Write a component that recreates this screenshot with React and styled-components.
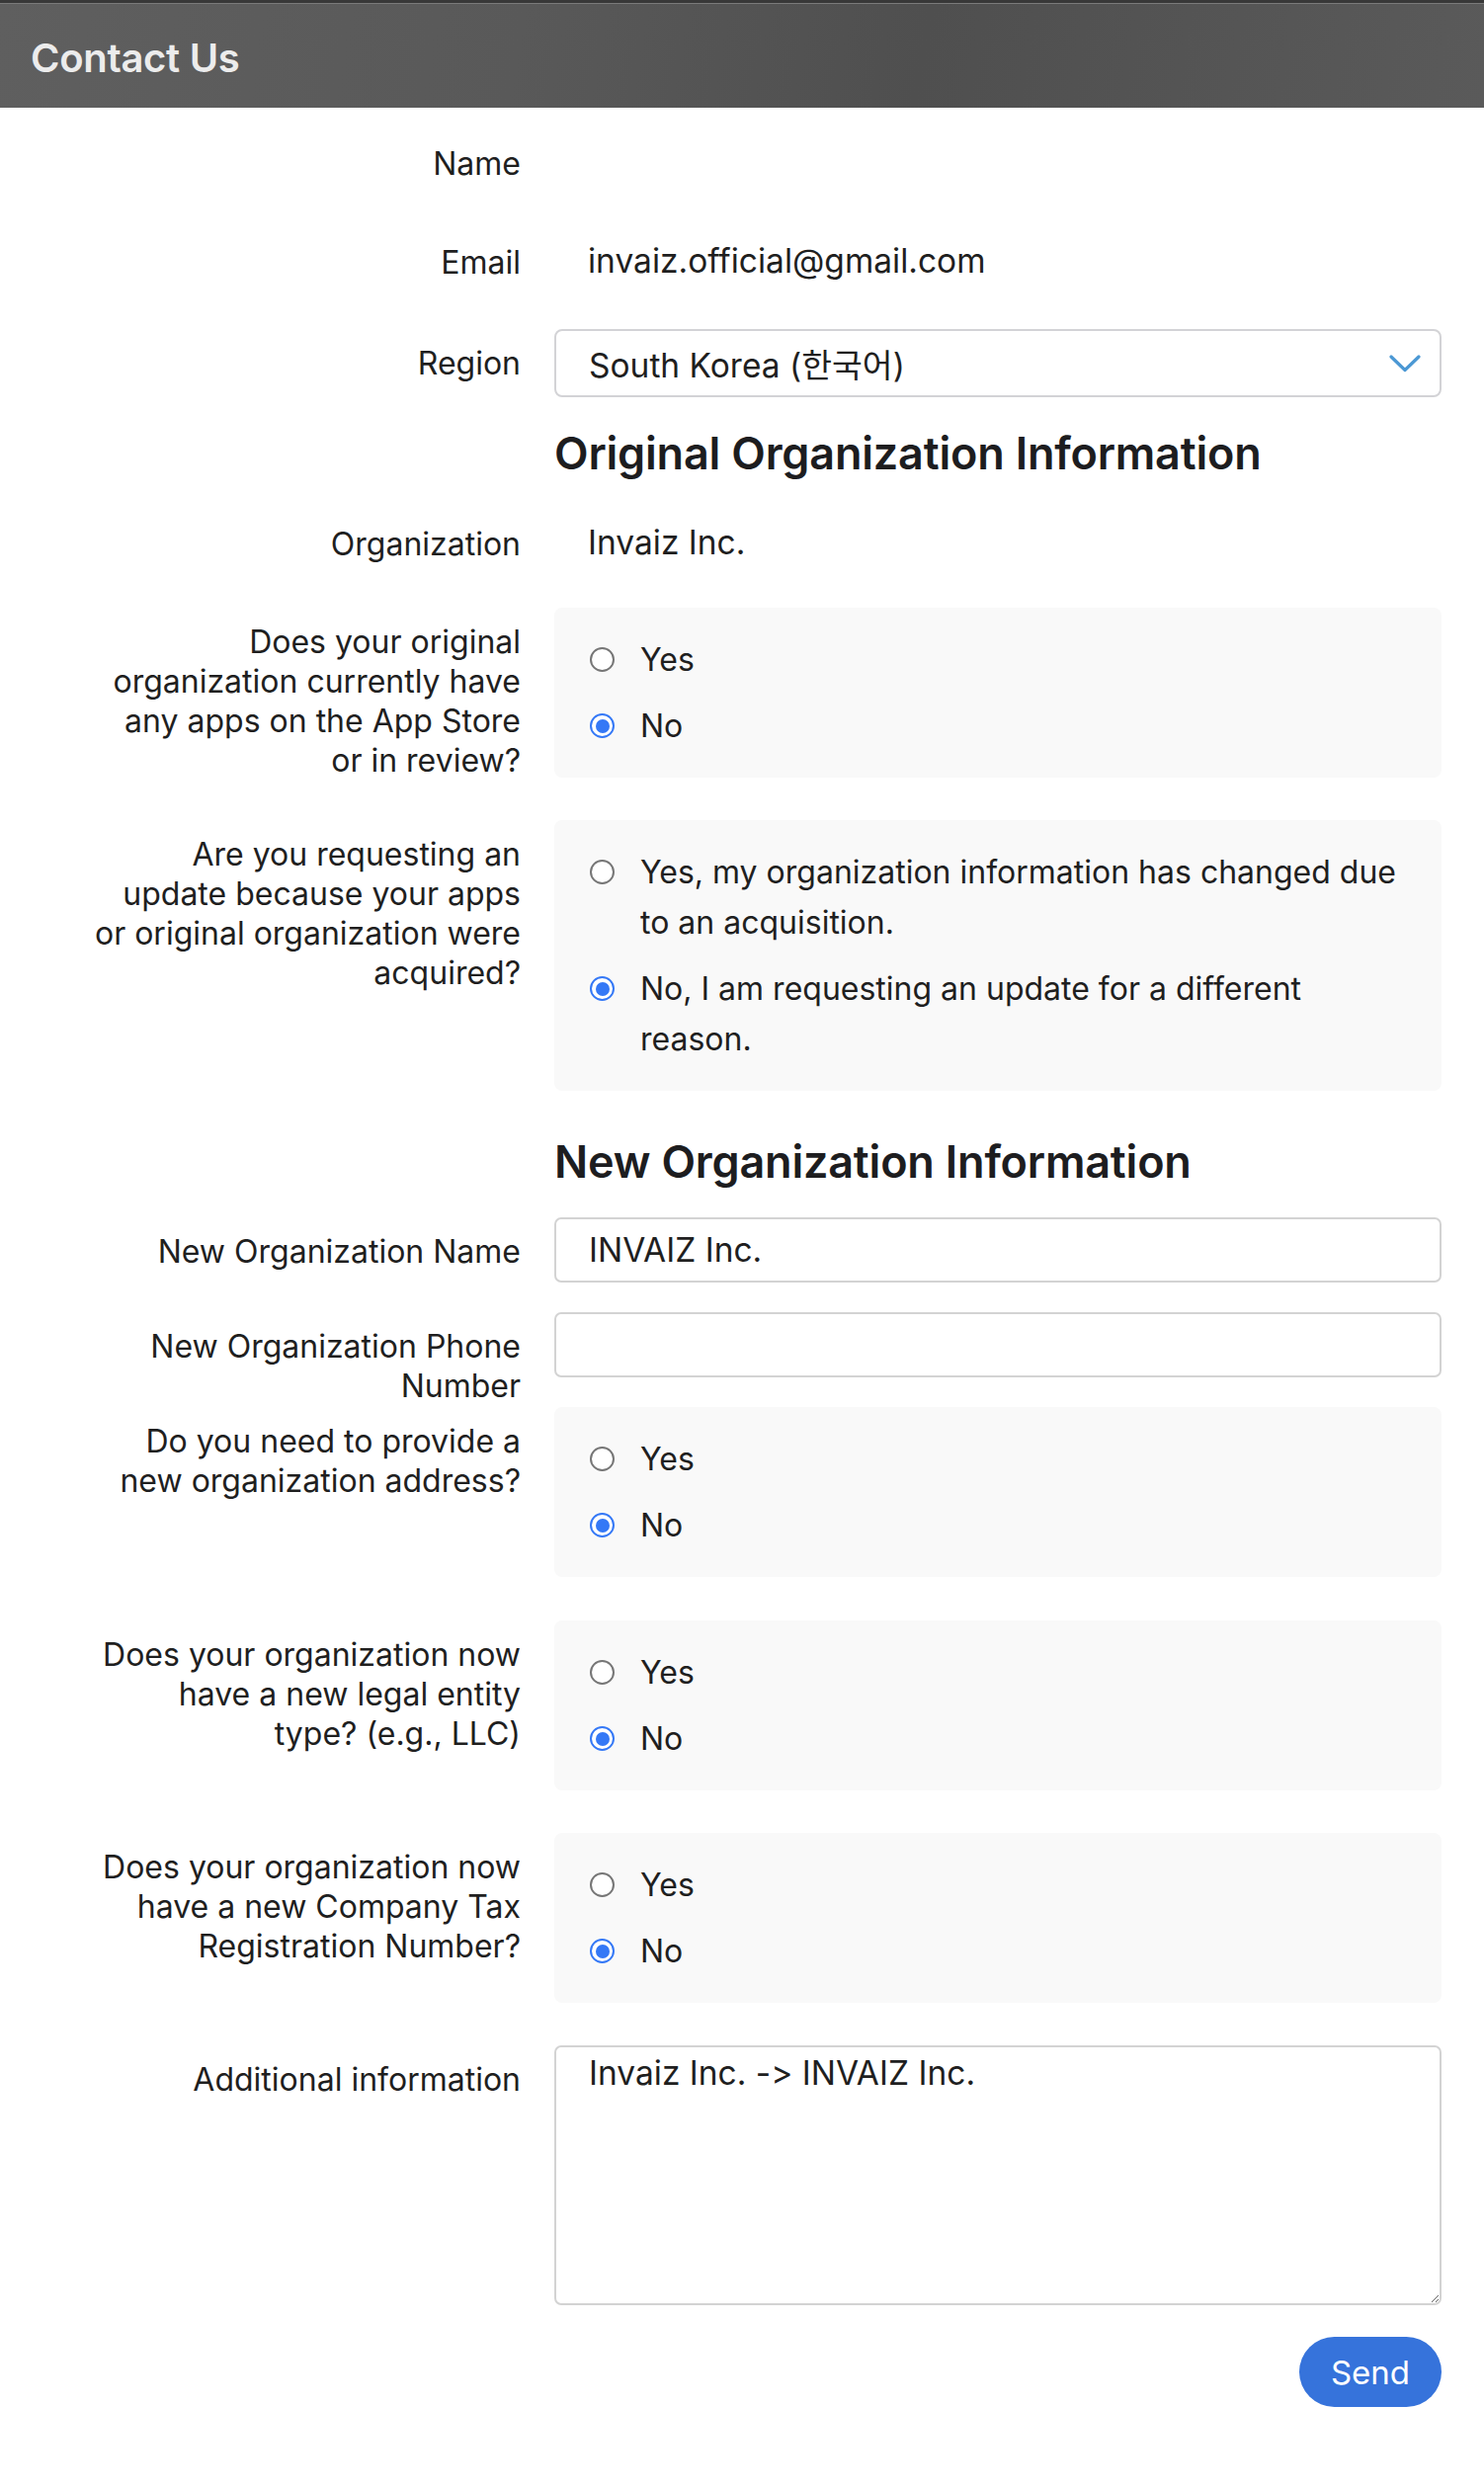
import React from "react";
import styled, { createGlobalStyle } from "styled-components";

const GlobalStyle = createGlobalStyle`
  html, body {
    margin: 0;
    padding: 0;
    background: #ffffff;
  }
  body {
    font-family: Inter, "Noto Sans", "Noto Sans CJK KR", sans-serif;
    font-feature-settings: "calt" 0, "liga" 0;
    color: #1d1d1f;
    -webkit-font-smoothing: antialiased;
  }
  input, textarea, button {
    font-feature-settings: "calt" 0, "liga" 0;
  }
  * { box-sizing: border-box; }
`;

const Page = styled.div`
  width: 100%;
  background: #fff;
`;

const Header = styled.header`
  height: 109px;
  border-top: 3px solid #383838;
  box-shadow: inset 0 1px 0 #7a7a7a;
  background: linear-gradient(100deg, #5f5f5f 0%, #595959 35%, #4f4f4f 62%, #5a5a5a 100%);
  display: flex;
  align-items: center;
  padding-left: 31px;
  padding-top: 4px;
`;

const Title = styled.h1`
  margin: 0;
  font-size: 40px;
  font-weight: 600;
  color: #ececec;
  letter-spacing: -0.3px;
`;

const Form = styled.form`
  padding: 22px 43px 83px 30px;
  display: flex;
  flex-direction: column;
`;

const Row = styled.div`
  display: flex;
  align-items: flex-start;
  gap: 34px;
`;

const Label = styled.div`
  width: 497px;
  flex-shrink: 0;
  text-align: right;
  font-size: 32px;
  line-height: 40px;
  padding-top: 15px;
  color: #1f1f1f;
  white-space: nowrap;
`;

const Field = styled.div`
  flex: 1;
  min-width: 0;
  margin-bottom: ${(p) => p.$mb}px;
`;

const StaticValue = styled.div`
  height: 66px;
  line-height: 66px;
  padding-left: 34px;
  font-size: 33.5px;
  color: #1f1f1f;
`;

const SelectBox = styled.div`
  height: 69px;
  border: 2px solid #d3d3d6;
  border-radius: 8px;
  display: flex;
  align-items: center;
  justify-content: space-between;
  padding: 0 19px 0 33px;
  font-size: 33.5px;
  color: #1f1f1f;
  background: #fff;
`;

const Heading = styled.h2`
  margin: 0;
  font-size: 45px;
  line-height: 50px;
  font-weight: 600;
  color: #1d1d1f;
  letter-spacing: -0.2px;
`;

const TextInput = styled.input`
  display: block;
  width: 100%;
  height: 66px;
  border: 2px solid #d3d3d3;
  border-radius: 7px;
  padding: 0 33px;
  font-family: inherit;
  font-size: 33.5px;
  color: #1f1f1f;
  background: #fff;
  outline: none;
`;

const TextArea = styled.textarea`
  display: block;
  width: 100%;
  height: 263px;
  border: 2px solid #d3d3d3;
  border-radius: 7px;
  padding: 6px 33px;
  font-family: inherit;
  font-size: 33.5px;
  line-height: 40px;
  color: #1f1f1f;
  background: #fff;
  outline: none;
  resize: vertical;
`;

const RadioBox = styled.div`
  background: #f9f9f9;
  border-radius: 8px;
  padding: 27px 36px 27px 36px;
  display: flex;
  flex-direction: column;
  gap: 16px;
`;

const Option = styled.label`
  display: flex;
  align-items: flex-start;
  gap: 26px;
  font-size: 32px;
  line-height: 51px;
  color: #1f1f1f;
`;

const Radio = styled.span`
  flex-shrink: 0;
  width: 25px;
  height: 25px;
  margin-top: 13px;
  border-radius: 50%;
  background: #fff;
  border: ${(p) => (p.$checked ? "2.5px solid #3478f6" : "2px solid #767676")};
  display: flex;
  align-items: center;
  justify-content: center;
  &::after {
    content: "";
    display: ${(p) => (p.$checked ? "block" : "none")};
    width: 14px;
    height: 14px;
    border-radius: 50%;
    background: #3478f6;
  }
`;

const OptionText = styled.span`
  flex: 1;
`;

const Actions = styled.div`
  display: flex;
  justify-content: flex-end;
`;

const SendButton = styled.button`
  height: 71px;
  padding: 0 32px;
  border: none;
  border-radius: 36px;
  background: #3673db;
  color: #fff;
  font-family: inherit;
  font-size: 33px;
  font-weight: 400;
  cursor: pointer;
`;

const Chevron = () => (
  <svg width="32" height="18" viewBox="0 0 32 18" fill="none">
    <polyline
      points="2,2 16,15.5 30,2"
      stroke="#4b98d4"
      strokeWidth="3.2"
      strokeLinecap="round"
      strokeLinejoin="round"
    />
  </svg>
);

const LabelText = ({ lines }) => (
  <Label>
    {lines.map((l, i) => (
      <React.Fragment key={i}>
        {l}
        {i < lines.length - 1 && <br />}
      </React.Fragment>
    ))}
  </Label>
);

const RadioGroup = ({ options, checked }) => (
  <RadioBox>
    {options.map((o, i) => (
      <Option key={i}>
        <Radio $checked={i === checked} />
        <OptionText>{o}</OptionText>
      </Option>
    ))}
  </RadioBox>
);

const yesNo = ["Yes", "No"];

export default function App() {
  return (
    <Page>
      <GlobalStyle />
      <Header>
        <Title>Contact Us</Title>
      </Header>
      <Form onSubmit={(e) => e.preventDefault()}>
        <Row>
          <LabelText lines={["Name"]} />
          <Field $mb={34}>
            <StaticValue />
          </Field>
        </Row>
        <Row>
          <LabelText lines={["Email"]} />
          <Field $mb={36}>
            <StaticValue>invaiz.official@gmail.com</StaticValue>
          </Field>
        </Row>
        <Row>
          <LabelText lines={["Region"]} />
          <Field $mb={32}>
            <SelectBox>
              <span>South Korea (한국어)</span>
              <Chevron />
            </SelectBox>
          </Field>
        </Row>
        <Row>
          <LabelText lines={[""]} />
          <Field $mb={32}>
            <Heading>Original Organization Information</Heading>
          </Field>
        </Row>
        <Row>
          <LabelText lines={["Organization"]} />
          <Field $mb={33}>
            <StaticValue>Invaiz Inc.</StaticValue>
          </Field>
        </Row>
        <Row>
          <LabelText
            lines={[
              "Does your original",
              "organization currently have",
              "any apps on the App Store",
              "or in review?",
            ]}
          />
          <Field $mb={43}>
            <RadioGroup options={yesNo} checked={1} />
          </Field>
        </Row>
        <Row>
          <LabelText
            lines={[
              "Are you requesting an",
              "update because your apps",
              "or original organization were",
              "acquired?",
            ]}
          />
          <Field $mb={47}>
            <RadioGroup
              checked={1}
              options={[
                "Yes, my organization information has changed due to an acquisition.",
                "No, I am requesting an update for a different reason.",
              ]}
            />
          </Field>
        </Row>
        <Row>
          <LabelText lines={[""]} />
          <Field $mb={31}>
            <Heading>New Organization Information</Heading>
          </Field>
        </Row>
        <Row>
          <LabelText lines={["New Organization Name"]} />
          <Field $mb={30}>
            <TextInput defaultValue="INVAIZ Inc." />
          </Field>
        </Row>
        <Row>
          <LabelText lines={["New Organization Phone", "Number"]} />
          <Field $mb={30}>
            <TextInput defaultValue="" />
          </Field>
        </Row>
        <Row>
          <LabelText lines={["Do you need to provide a", "new organization address?"]} />
          <Field $mb={44}>
            <RadioGroup options={yesNo} checked={1} />
          </Field>
        </Row>
        <Row>
          <LabelText
            lines={["Does your organization now", "have a new legal entity", "type? (e.g., LLC)"]}
          />
          <Field $mb={43}>
            <RadioGroup options={yesNo} checked={1} />
          </Field>
        </Row>
        <Row>
          <LabelText
            lines={[
              "Does your organization now",
              "have a new Company Tax",
              "Registration Number?",
            ]}
          />
          <Field $mb={43}>
            <RadioGroup options={yesNo} checked={1} />
          </Field>
        </Row>
        <Row>
          <LabelText lines={["Additional information"]} />
          <Field $mb={32}>
            <TextArea defaultValue="Invaiz Inc. -> INVAIZ Inc." />
          </Field>
        </Row>
        <Actions>
          <SendButton type="submit">Send</SendButton>
        </Actions>
      </Form>
    </Page>
  );
}
